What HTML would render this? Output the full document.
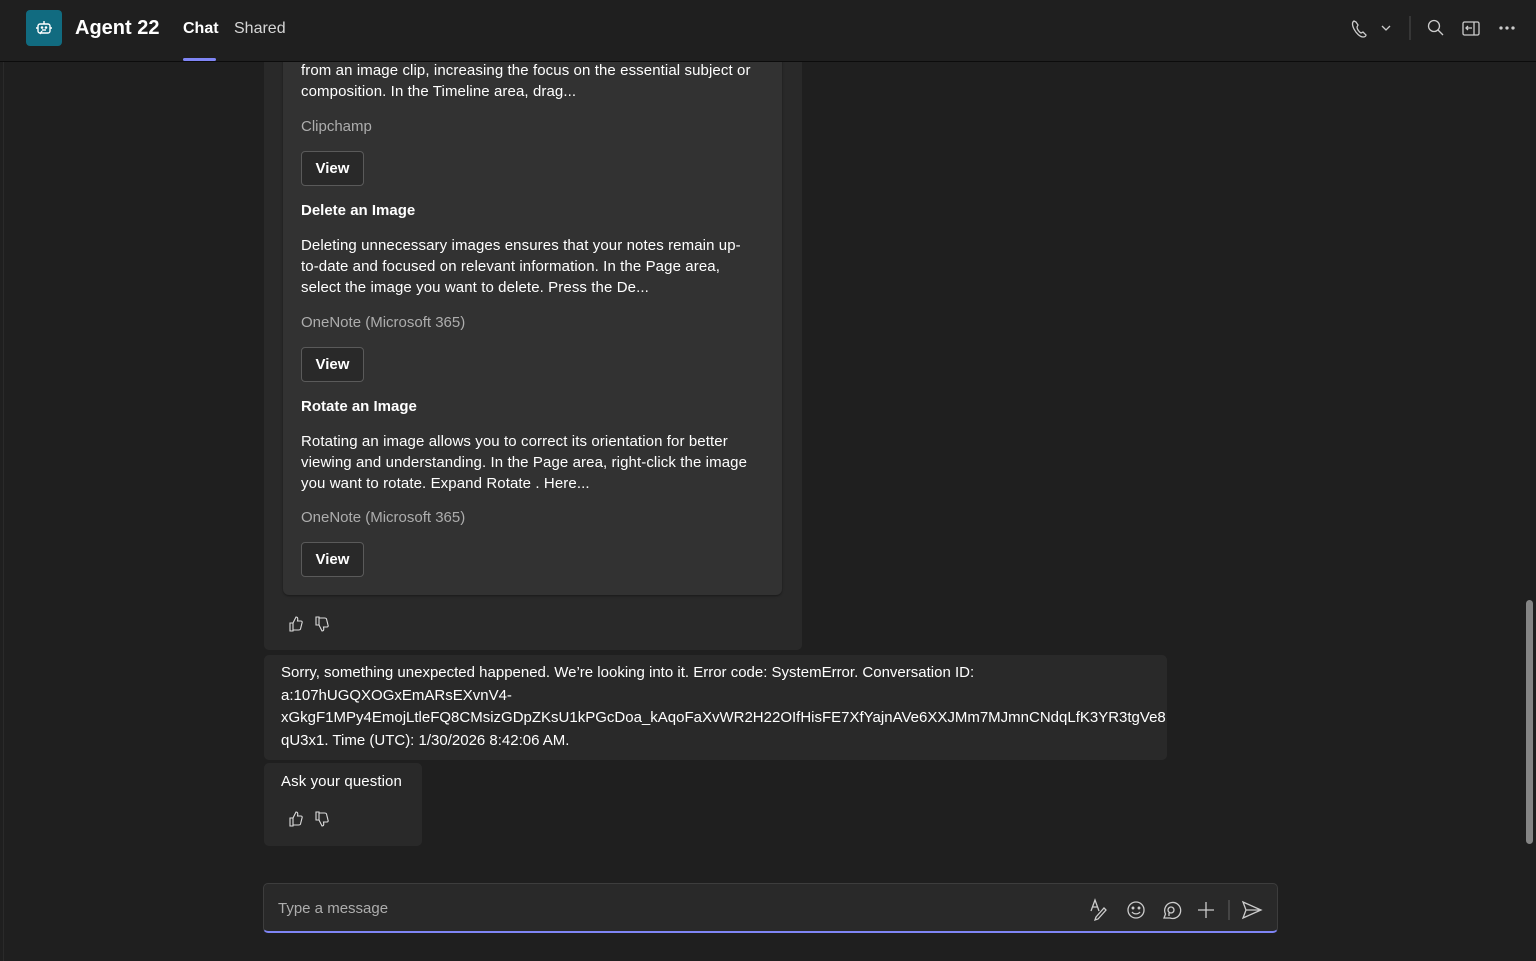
<!DOCTYPE html>
<html><head><meta charset="utf-8"><style>
*{box-sizing:border-box;margin:0;padding:0}
body{width:1536px;height:961px;background:#1f1f1f;font-family:"Liberation Sans",sans-serif;color:#fff;position:relative;overflow:hidden;font-size:15px}
.hdr{position:absolute;left:0;top:0;width:1536px;height:62px;border-bottom:1px solid #0c0c0c;background:#1f1f1f}
.abs{position:absolute}
.bub{position:absolute;background:#292929;border-radius:5px}
.card{position:absolute;left:283px;top:40px;width:499px;height:555px;background:#323232;border-radius:0 0 6px 6px;box-shadow:0 1px 2px rgba(0,0,0,.4)}
.t{position:absolute;left:301px;line-height:21px;font-size:15px;color:#fff;letter-spacing:0.1px;white-space:nowrap}
.src{position:absolute;left:301px;color:#adadad;font-size:15px}
.btn{position:absolute;left:301px;width:63px;height:35px;border:1px solid #5a5a5a;border-radius:4px;background:#292929;font-weight:bold;text-align:center;line-height:33px;font-size:15px}
.h{position:absolute;left:301px;font-weight:bold;font-size:15px}
</style></head><body>
<div class="abs" style="left:3px;top:62px;width:1px;height:899px;background:#2a2a2a"></div>
<div class="bub" style="left:264px;top:40px;width:538px;height:610px"></div>
<div class="card"></div>
<div class="t" style="top:60px">from an image clip, increasing the focus on the essential subject or<br>composition. In the Timeline area, drag...</div>
<div class="src" style="top:118px">Clipchamp</div>
<div class="btn" style="top:151px">View</div>
<div class="h" style="top:202px">Delete an Image</div>
<div class="t" style="top:235px">Deleting unnecessary images ensures that your notes remain up-<br>to-date and focused on relevant information. In the Page area,<br>select the image you want to delete. Press the De...</div>
<div class="src" style="top:314px">OneNote (Microsoft 365)</div>
<div class="btn" style="top:347px">View</div>
<div class="h" style="top:398px">Rotate an Image</div>
<div class="t" style="top:431px">Rotating an image allows you to correct its orientation for better<br>viewing and understanding. In the Page area, right-click the image<br>you want to rotate. Expand Rotate . Here...</div>
<div class="src" style="top:509px">OneNote (Microsoft 365)</div>
<div class="btn" style="top:542px">View</div>
<svg class="abs" style="left:286px;top:614px" width="50" height="20" viewBox="0 0 50 20" fill="none" stroke="#ddd" stroke-width="1.1"><path d="M4 9h3v8H4zM7 9l3-6c2 0 2 2 1.5 4H15c1 0 1.5 1 1 2l-1.5 6c-.3 1-1 1-2 1H7"/><path d="M30 11h3V3h-3zM33 11l3 6c2 0 2-2 1.5-4H41c1 0 1.5-1 1-2l-1.5-6c-.3-1-1-1-2-1H33"/></svg>

<div class="hdr"></div>
<div class="abs" style="left:26px;top:10px;width:36px;height:36px;background:#116b80;border-radius:4px"></div>
<svg class="abs" style="left:34px;top:18px" width="20" height="20" viewBox="0 0 20 20" fill="none" stroke="#fff" stroke-width="1.4"><rect x="4" y="6" width="12" height="9" rx="2"/><path d="M10 3v3M2 10h2M16 10h2M8 13l-2 3"/><circle cx="8" cy="9.5" r=".6" fill="#fff"/><circle cx="12" cy="9.5" r=".6" fill="#fff"/><path d="M8 12h4"/></svg>
<div class="abs" style="left:75px;top:17px;font-size:20px;font-weight:bold">Agent 22</div>
<div class="abs" style="left:183px;top:20px;font-size:16px;font-weight:bold">Chat</div>
<div class="abs" style="left:183px;top:58px;width:33px;height:3px;background:#7f85f5;border-radius:2px"></div>
<div class="abs" style="left:234px;top:20px;font-size:16px;color:#d6d6d6">Shared</div>
<svg class="abs" style="left:1348px;top:16px" width="180" height="26" viewBox="0 0 180 26" fill="none" stroke="#ccc" stroke-width="1.3">
<path d="M6 5c-2 1-2 4 0 8s6 8 9 8c2 0 3-1 3-2l-3-3-2 1c-2-1-4-4-4-6l1-2-2-3z"/>
<path d="M34 10l4 4 4-4"/>
<path d="M62 0v24" stroke="#444"/>
<circle cx="86" cy="10" r="5.5"/><path d="M90 14l5 5"/>
<rect x="115" y="6" width="16" height="13" rx="1.5"/><path d="M126 6v13M124 12h-6M120 10l-2 2 2 2"/>
<circle cx="153" cy="12" r="1" fill="#ccc"/><circle cx="159" cy="12" r="1" fill="#ccc"/><circle cx="165" cy="12" r="1" fill="#ccc"/>
</svg>

<div class="bub" style="left:264px;top:655px;width:903px;height:105px"></div>
<div class="abs" style="left:281px;top:662px;line-height:22.5px;width:875px;white-space:nowrap;font-size:15px;letter-spacing:0px">Sorry, something unexpected happened. We’re looking into it. Error code: SystemError. Conversation ID:<br>a:107hUGQXOGxEmARsEXvnV4-<br>xGkgF1MPy4EmojLtleFQ8CMsizGDpZKsU1kPGcDoa_kAqoFaXvWR2H22OIfHisFE7XfYajnAVe6XXJMm7MJmnCNdqLfK3YR3tgVe8<br>qU3x1. Time (UTC): 1/30/2026 8:42:06 AM.</div>

<div class="bub" style="left:264px;top:763px;width:158px;height:83px"></div>
<div class="abs" style="left:281px;top:773px;font-size:15px;letter-spacing:0.1px">Ask your question</div>
<svg class="abs" style="left:286px;top:809px" width="50" height="20" viewBox="0 0 50 20" fill="none" stroke="#ddd" stroke-width="1.1"><path d="M4 9h3v8H4zM7 9l3-6c2 0 2 2 1.5 4H15c1 0 1.5 1 1 2l-1.5 6c-.3 1-1 1-2 1H7"/><path d="M30 11h3V3h-3zM33 11l3 6c2 0 2-2 1.5-4H41c1 0 1.5-1 1-2l-1.5-6c-.3-1-1-1-2-1H33"/></svg>

<div class="abs" style="left:1526px;top:600px;width:7px;height:244px;background:#858585;border-radius:4px"></div>

<div class="abs" style="left:263px;top:883px;width:1015px;height:50px;background:#292929;border:1px solid #3d3d3d;border-bottom:2px solid #7f85f5;border-radius:5px"></div>
<div class="abs" style="left:278px;top:900px;color:#adadad;font-size:15px">Type a message</div>
<svg class="abs" style="left:1088px;top:897px" width="180" height="26" viewBox="0 0 180 26" fill="none" stroke="#ccc" stroke-width="1.3">
<path d="M3 14l4-11 4 11M4.5 10h5M8 20l8-9 2 2-8 9-3 1z"/>
<circle cx="48" cy="13" r="8"/><circle cx="45" cy="11" r=".8" fill="#ccc"/><circle cx="51" cy="11" r=".8" fill="#ccc"/><path d="M44 15c2 2.5 6 2.5 8 0"/>
<path d="M76 21l1.5-4A8 8 0 1 1 82 21z"/><circle cx="83" cy="13" r="3"/><path d="M81 16v3"/>
<path d="M118 5v16M110 13h16"/>
<path d="M141 3v20" stroke="#555"/>
<path d="M155 5l18 8-18 8 3-8zM158 13h15"/>
</svg>
</body></html>
